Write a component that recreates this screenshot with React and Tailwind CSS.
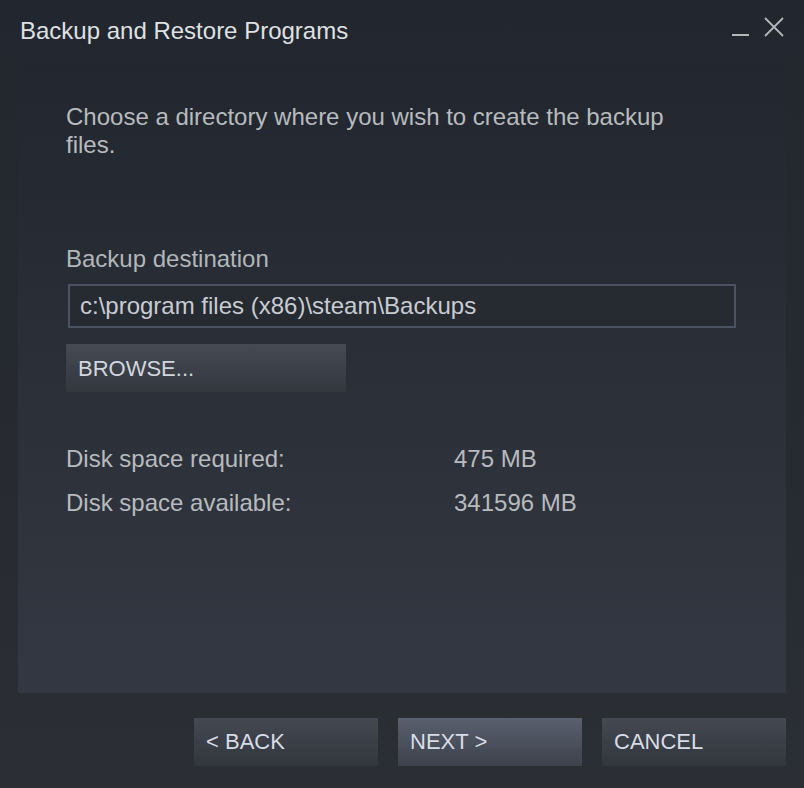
import React from 'react';

function WindowControls() {
  return (
    <div className="flex items-start gap-[14px] pt-[17px] pr-[20px]">
      <svg width="18" height="20" viewBox="0 0 18 20" className="mt-[1px]">
        <rect x="0" y="16" width="17" height="2" fill="#b4b6b8" />
      </svg>
      <svg width="20" height="20" viewBox="0 0 20 20">
        <path d="M1 1 L19 19 M19 1 L1 19" stroke="#b4b6b8" strokeWidth="1.8" fill="none" />
      </svg>
    </div>
  );
}

function Button({ children, primary, className = '' }) {
  return (
    <button
      className={
        'h-[48px] text-left pl-[12px] text-[22px] leading-none text-[#d8dce6] ' +
        (primary
          ? 'bg-gradient-to-b from-[#59606e] to-[#3d424c] '
          : 'bg-gradient-to-b from-[#444952] to-[#32363d] ') +
        className
      }
    >
      {children}
    </button>
  );
}

export default function App() {
  return (
    <div
      className="w-[804px] h-[788px] flex flex-col bg-gradient-to-b from-[#22262e] to-[#2b2e33] text-[#b7bbbe]"
      style={{ fontFamily: '"Liberation Sans", Arial, sans-serif' }}
    >
      {/* Title bar */}
      <div className="h-[62px] flex justify-between">
        <div className="pl-[20px] pt-[17px] text-[24px] leading-[28px] text-[#dfe1e3]">
          Backup and Restore Programs
        </div>
        <WindowControls />
      </div>

      {/* Content panel */}
      <div className="mx-[18px] h-[631px] bg-gradient-to-b from-[#22262e] to-[#343842] pl-[48px] pr-[50px] pt-[41px]">
        <p className="text-[24px] leading-[28px] w-[620px]">
          Choose a directory where you wish to create the backup files.
        </p>

        <div className="mt-[86px] text-[24px] leading-[28px] text-[#b2b6ba]">Backup destination</div>
        <div className="mt-[11px] ml-[2px] w-[668px] h-[44px] border-2 border-[#4b5261] bg-[#262a31] flex items-center pl-[10px] text-[24px] text-[#c8ccd2]">
          c:\program files (x86)\steam\Backups
        </div>
        <button className="mt-[16px] w-[280px] h-[48px] text-left pl-[12px] text-[22px] text-[#d2d6de] bg-gradient-to-b from-[#454a54] to-[#33373e]">
          BROWSE...
        </button>

        <div className="mt-[53px] flex flex-col gap-[16px] text-[24px] leading-[28px]">
          <div className="grid grid-cols-[388px_1fr]">
            <span>Disk space required:</span>
            <span>475 MB</span>
          </div>
          <div className="grid grid-cols-[388px_1fr]">
            <span>Disk space available:</span>
            <span>341596 MB</span>
          </div>
        </div>
      </div>

      {/* Footer buttons */}
      <div className="mt-[25px] flex justify-end gap-[20px] pr-[18px]">
        <Button className="w-[184px]">&lt; BACK</Button>
        <Button primary className="w-[184px]">NEXT &gt;</Button>
        <Button className="w-[184px]">CANCEL</Button>
      </div>
    </div>
  );
}
